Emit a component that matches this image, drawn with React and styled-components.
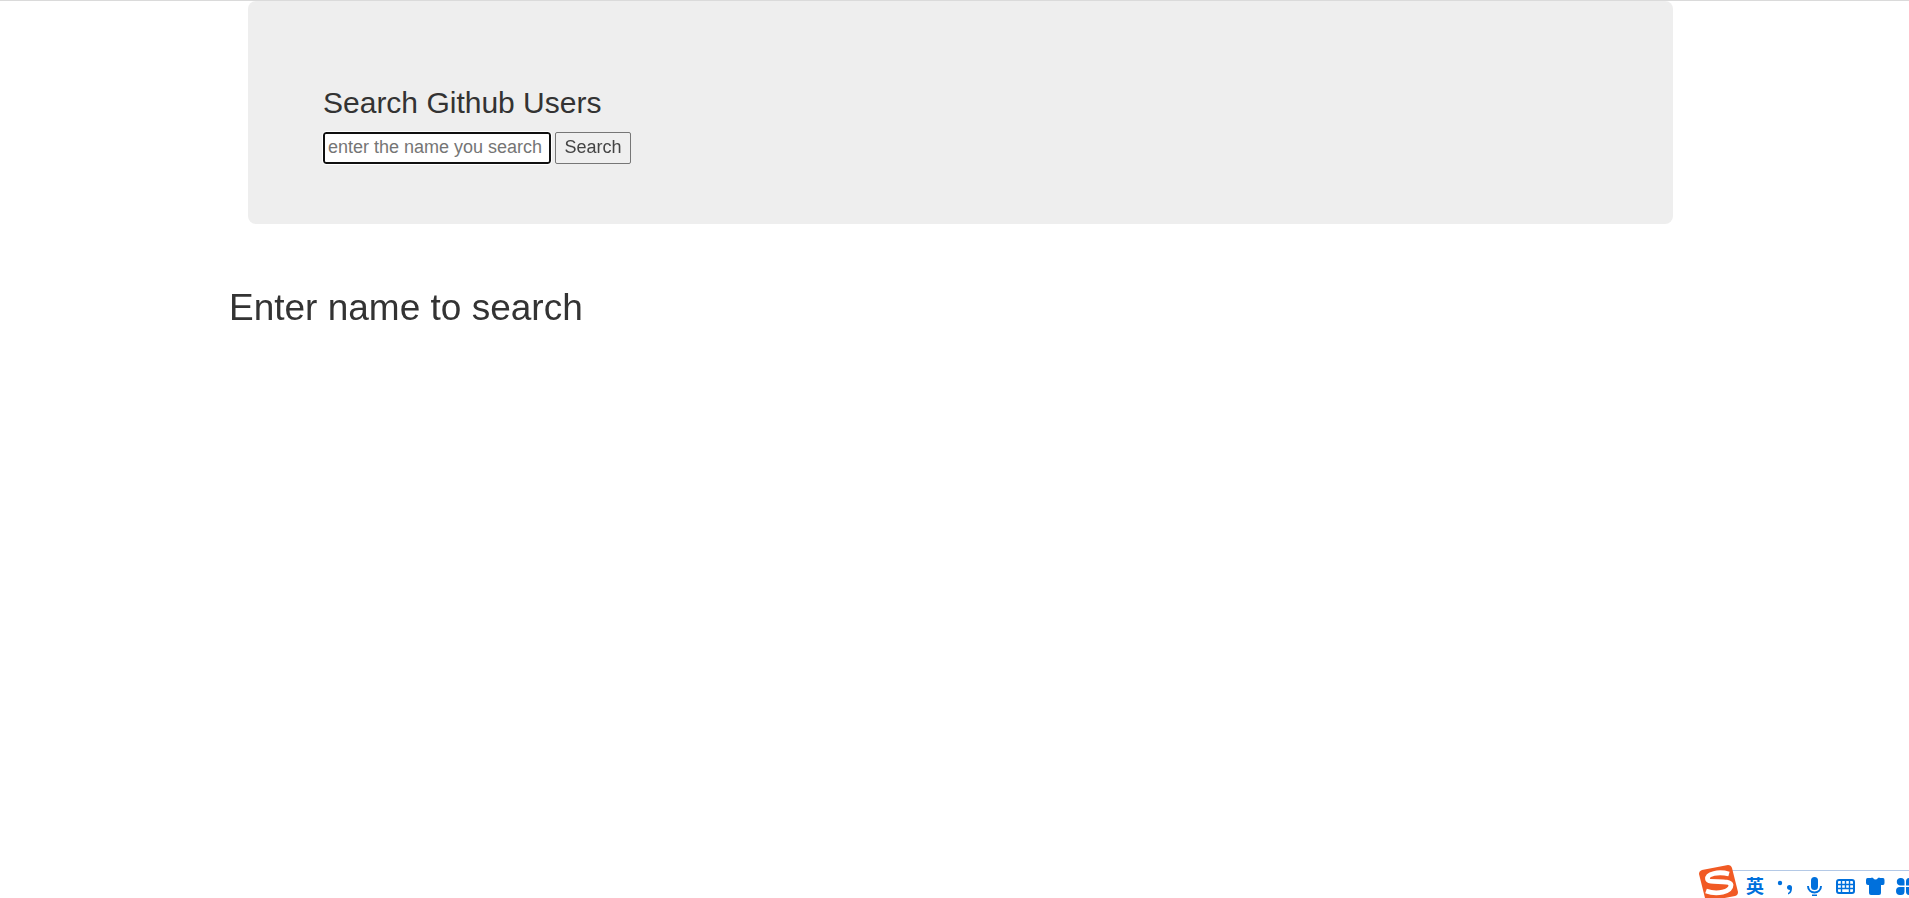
import React from "react";
import styled, { createGlobalStyle } from "styled-components";

const GlobalStyle = createGlobalStyle`
  *, *::before, *::after { box-sizing: border-box; }
  body {
    margin: 0;
    background: #fff;
    color: #333;
    font-family: Arial, "Liberation Sans", "Noto Sans CJK SC", sans-serif;
    font-size: 18px;
    line-height: 25px;
  }
`;

const Page = styled.div`
  border-top: 1px solid #dadada;
  padding-left: 11px;
`;

const Container = styled.main`
  max-width: 1462px;
  margin: 0 auto;
`;

const Jumbotron = styled.section`
  margin: 0 18px 62px 19px;
  padding: 85px 75px 60px;
  border-radius: 8px;
  background: #eee;
`;

const Heading = styled.h3`
  margin: 0 0 13px;
  font-size: 30px;
  font-weight: 500;
  line-height: 33px;
`;

const SearchForm = styled.form`
  display: flex;
  gap: 4px;
`;

const SearchInput = styled.input`
  width: 228px;
  height: 32px;
  padding: 0 3px 2px;
  border: 2px solid #101010;
  border-radius: 3px;
  outline: 1px solid #fff;
  background: #fff;
  color: #333;
  font: inherit;
  &::placeholder { color: #757575; opacity: 1; }
`;

const SearchButton = styled.button`
  width: 76px;
  height: 32px;
  padding: 0 0 2px;
  border: 1px solid #767676;
  border-radius: 2px;
  background: #efefef;
  color: #444;
  font: inherit;
`;

const Message = styled.h2`
  margin: 0;
  font-size: 37px;
  font-weight: 500;
  line-height: 44px;
`;

const ImeBar = styled.aside`
  position: fixed;
  right: 0;
  bottom: 0;
  display: flex;
  align-items: flex-end;
  height: 33px;
  overflow: hidden;
`;

const Logo = styled.svg`
  width: 40px;
  height: 33px;
  margin-right: -7px;
  z-index: 1;
`;

const Tools = styled.div`
  display: flex;
  align-items: flex-end;
  gap: 10px;
  height: 28px;
  padding-left: 14px;
  border-top: 1px solid #b4c9e6;
  background: #fff;
  color: #0070dc;
`;

const Language = styled.span`
  width: 20px;
  font-size: 18px;
  font-weight: 700;
  line-height: 22px;
`;

const Tool = styled.svg`
  width: 20px;
  height: 22px;
`;

const LastTool = styled(Tool)`
  margin-right: -7px;
`;

export default function App() {
  return (
    <>
      <GlobalStyle />
      <Page>
        <Container>
          <Jumbotron>
            <Heading>Search Github Users</Heading>
            <SearchForm onSubmit={(e) => e.preventDefault()}>
              <SearchInput type="text" aria-label="User name" placeholder="enter the name you search" autoFocus />
              <SearchButton type="submit">Search</SearchButton>
            </SearchForm>
          </Jumbotron>
          <Message>Enter name to search</Message>
        </Container>
      </Page>
      <ImeBar>
        <Logo viewBox="0 0 40 33" aria-hidden="true">
          <path d="M3 5 29 0Q32 0 33 3L39 27Q39 30 36 31L10 36Q7 36 6 33L0 9Q0 6 3 5Z" fill="#f15a24" />
          <path d="M30 9C19 6 8 9 8.500 14C9 19 31 14 32 20C32 27 18 30 7 26" fill="none" stroke="#fff" strokeWidth="4.8" />
        </Logo>
        <Tools>
          <Language>英</Language>
          <Tool viewBox="0 0 20 22" fill="currentColor" aria-hidden="true">
            <circle cx="4" cy="7" r="2.2" />
            <path d="M11 11.5a2.5 2.5 0 0 1 5 0c0 4-1 6-4 7v-1.5q2-1 2-3c-2 0-3-1-3-2.5z" />
          </Tool>
          <Tool viewBox="0 0 20 22" fill="currentColor" aria-hidden="true">
            <rect x="5" y="1" width="7" height="13" rx="3.5" />
            <path d="M2 10c0 8.500 13 8.500 13 0" fill="none" stroke="currentColor" strokeWidth="2" />
            <path d="M6 18.500h5v1.500h-5z" />
          </Tool>
          <Tool viewBox="0 0 20 22" fill="none" stroke="currentColor" strokeWidth="2" aria-hidden="true">
            <rect x="1" y="4" width="17" height="13" rx="2" />
            <path d="M1 8.500h17M1 12.500h17M5.500 5v12M9.500 5v8M13.500 5v12" strokeWidth="1.4" />
          </Tool>
          <Tool viewBox="0 0 20 22" fill="currentColor" aria-hidden="true">
            <path d="M5 2q1-1 2 0 2.500 3 5 0 1-1 2 0h3q1.500 0 1.500 2v3q0 2-1.500 2h-2v8q0 2-2 2h-8q-2 0-2-2V9H2Q0 9 0 7V4q0-2 1.500-2z" />
          </Tool>
          <LastTool viewBox="0 0 20 22" fill="currentColor" aria-hidden="true">
            <path d="M8.500 9.500H4a3.800 3.800 0 0 1 0-7.500h1q3.500 0 3.500 3.500zM10 9.500v-4q0-3.500 3.500-3.500h1a3.800 3.800 0 0 1 0 7.500zM8.500 11v4.500q0 3.500-3.500 3.500H4a3.800 3.800 0 0 1 0-8zM10 11h4.500a3.800 3.800 0 0 1 0 8h-1q-3.500 0-3.500-3.500z" />
          </LastTool>
        </Tools>
      </ImeBar>
    </>
  );
}
